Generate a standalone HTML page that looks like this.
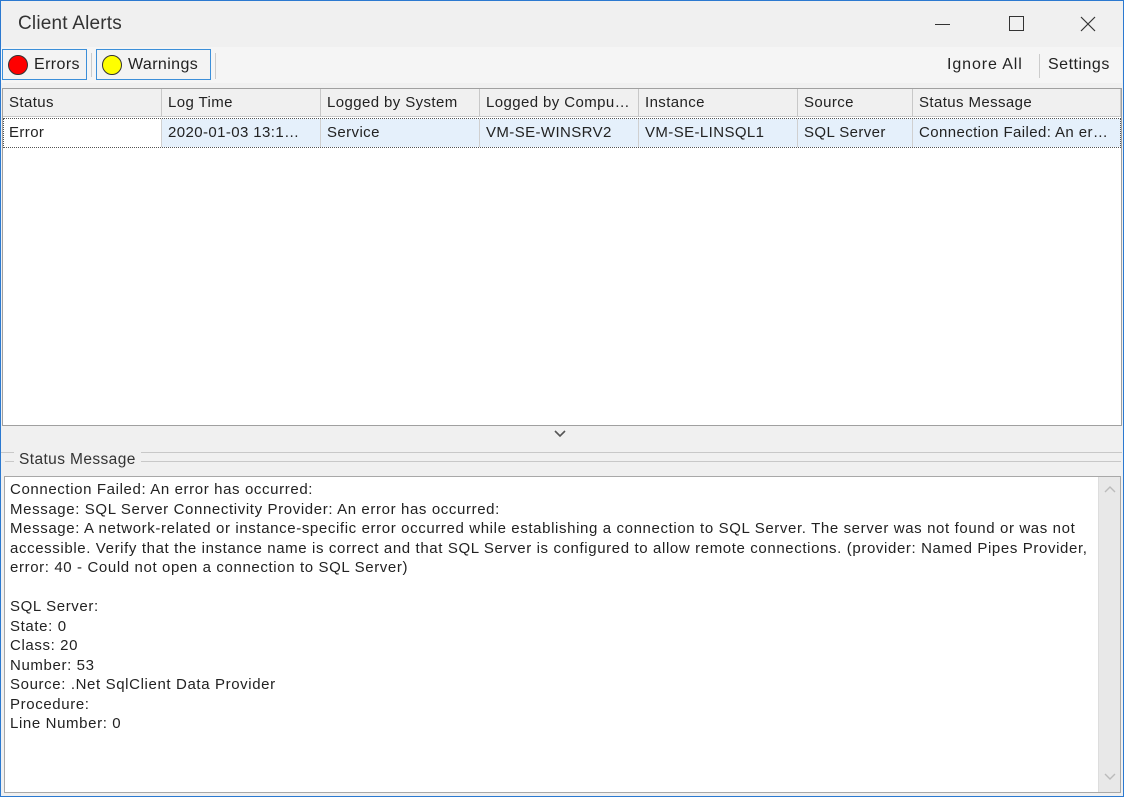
<!DOCTYPE html>
<html><head><meta charset="utf-8"><style>
*{margin:0;padding:0;box-sizing:border-box}
body{width:1124px;height:797px;overflow:hidden;background:#f0f0f0;font-family:"Liberation Sans",sans-serif;color:#222;position:relative;letter-spacing:0.4px}
.win{position:absolute;left:0;top:0;width:1124px;height:797px;border:1px solid #2b79d0}
.abs{position:absolute}
.title{left:18px;top:13px;font-size:19px;color:#333;letter-spacing:0.2px}
.tb{top:47px;left:1px;width:1121px;height:36px;background:#f5f5f5}
.btn{top:49px;height:31px;border:1px solid #3c8fd9;font-size:16px;line-height:29px;background:#f3f3f3}
.dot{position:absolute;top:5px;left:5px;width:20px;height:20px;border-radius:50%;border:1px solid #333}
.grid{left:2px;top:88px;width:1120px;height:338px;background:#fff;border:1px solid #a0a0a0}
.hdr{position:absolute;top:0;height:28px;background:#f0f0f0;border-right:1px solid #c8c8c8;border-bottom:1px solid #c8c8c8;font-size:15px;line-height:27px;padding-left:6px;white-space:nowrap;overflow:hidden}
.cell{position:absolute;top:30px;height:28px;background:#e5f0fb;border-right:1px solid #d0d0d0;font-size:15px;line-height:28px;padding-left:6px;white-space:nowrap;overflow:hidden}
.row{position:absolute;left:0;top:29px;width:1118px;height:30px;border:1px dotted #555;pointer-events:none}
.txt{left:4px;top:476px;width:1117px;height:317px;background:#fff;border:1px solid #a8a8a8;font-size:15px;line-height:19.5px;padding:3px 5px;color:#222;letter-spacing:0.62px;white-space:nowrap}
.sb{right:0;top:0;width:22px;height:315px;background:#e8e8e8;border-left:1px solid #ddd}
</style></head><body>
<div class="win"></div>
<div class="abs title">Client Alerts</div>
<svg class="abs" style="left:930px;top:14px" width="180" height="20">
<line x1="5" y1="10.5" x2="20" y2="10.5" stroke="#333" stroke-width="1"/>
<rect x="79.5" y="2.5" width="14" height="14" fill="none" stroke="#333"/>
<path d="M151 3 L165 17 M165 3 L151 17" stroke="#333" stroke-width="1.2"/>
</svg>
<div class="abs tb"></div>
<div class="abs btn" style="left:2px;width:85px"><div class="dot" style="background:#f00"></div><span style="position:absolute;left:31px">Errors</span></div>
<div class="abs" style="left:91px;top:53px;width:1px;height:24px;background:#ccc"></div>
<div class="abs btn" style="left:96px;width:115px"><div class="dot" style="background:#ff0"></div><span style="position:absolute;left:31px">Warnings</span></div>
<div class="abs" style="left:215px;top:53px;width:1px;height:26px;background:#ccc"></div>
<div class="abs" style="left:947px;top:56px;font-size:16px;letter-spacing:0.9px">Ignore All</div>
<div class="abs" style="left:1039px;top:54px;width:1px;height:24px;background:#ccc"></div>
<div class="abs" style="left:1048px;top:56px;font-size:16px;letter-spacing:0.5px">Settings</div>
<div class="abs grid">
<div class="hdr" style="left:0;width:159px">Status</div>
<div class="hdr" style="left:159px;width:159px">Log Time</div>
<div class="hdr" style="left:318px;width:159px">Logged by System</div>
<div class="hdr" style="left:477px;width:159px">Logged by Compu…</div>
<div class="hdr" style="left:636px;width:159px">Instance</div>
<div class="hdr" style="left:795px;width:115px">Source</div>
<div class="hdr" style="left:910px;width:208px">Status Message</div>
<div class="cell" style="left:0;width:159px;background:#fff">Error</div>
<div class="cell" style="left:159px;width:159px">2020-01-03 13:1…</div>
<div class="cell" style="left:318px;width:159px">Service</div>
<div class="cell" style="left:477px;width:159px">VM-SE-WINSRV2</div>
<div class="cell" style="left:636px;width:159px">VM-SE-LINSQL1</div>
<div class="cell" style="left:795px;width:115px">SQL Server</div>
<div class="cell" style="left:910px;width:208px;border-right:none">Connection Failed: An er…</div>
<div class="row"></div>
</div>
<svg class="abs" style="left:553px;top:429px" width="14" height="10"><path d="M2 2 L7 7 L12 2" fill="none" stroke="#555" stroke-width="1.6"/></svg>
<div class="abs" style="left:1px;top:452px;width:1121px;height:1px;background:#c8c8c8"></div>
<div class="abs" style="left:5px;top:461px;width:1116px;height:1px;background:#c8c8c8"></div>
<div class="abs" style="left:14px;top:451px;padding:0 5px;background:#f0f0f0;font-size:15.5px;color:#333">Status Message</div>
<div class="abs txt">
Connection Failed: An error has occurred:<br>
Message: SQL Server Connectivity Provider: An error has occurred:<br>
Message: A network-related or instance-specific error occurred while establishing a connection to SQL Server. The server was not found or was not<br>
accessible. Verify that the instance name is correct and that SQL Server is configured to allow remote connections. (provider: Named Pipes Provider,<br>
error: 40 - Could not open a connection to SQL Server)<br><br>
SQL Server:<br>State: 0<br>Class: 20<br>Number: 53<br>Source: .Net SqlClient Data Provider<br>Procedure:<br>Line Number: 0
<div class="abs sb">
<svg class="abs" style="left:5px;top:8px" width="12" height="8"><path d="M1 7 L6 2 L11 7" fill="none" stroke="#bbb" stroke-width="1.4"/></svg>
<svg class="abs" style="left:5px;top:296px" width="12" height="8"><path d="M1 1 L6 6 L11 1" fill="none" stroke="#bbb" stroke-width="1.4"/></svg>
</div>
</div>
</body></html>
